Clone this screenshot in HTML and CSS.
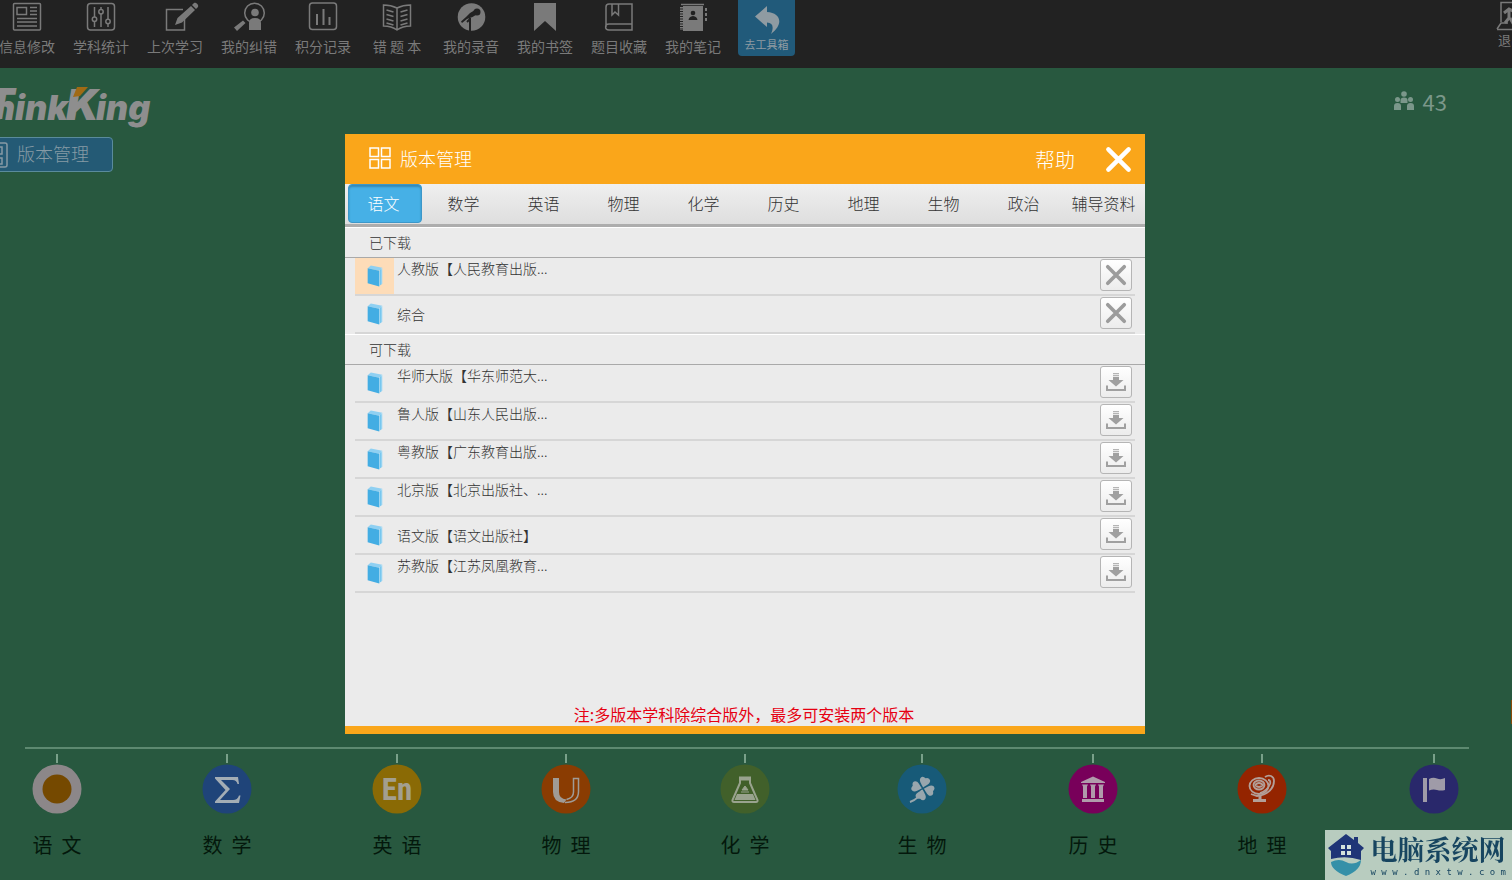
FILE: index.html
```
<!DOCTYPE html>
<html lang="zh-CN">
<head>
<meta charset="utf-8">
<meta name="viewport" content="width=device-width, initial-scale=1">
<title>版本管理</title>
<link rel="stylesheet" href="styles.css">
</head>
<body>
<svg class="sprite" aria-hidden="true">
  <symbol id="i-book" viewBox="0.5 0.5 15 21">
    <path d="M1 3.5 4 1 15 3.2 12 6z" fill="#8fd0f2"/>
    <path d="M12 6 15 3.2V18l-3 3z" fill="#a5dbf5"/>
    <path d="M13.5 4.7V19.5" stroke="#5dbbe9" stroke-width=".8"/>
    <path d="M1 3.5 12 6v15L1 18z" fill="#43ade3"/>
  </symbol>
  <symbol id="i-cross" viewBox="0 0 24 24">
    <path d="M3 3l18 18M21 3l-18 18" stroke="currentColor" stroke-width="4" stroke-linecap="round"/>
  </symbol>
  <symbol id="i-load" viewBox="-1 -1 22 22">
    <path d="M7 1h6v1.200H7zM7 3h6v1.200H7z" fill="#b5b5b5"/>
    <path d="M7 5h6v3h4.500L10 14.500 2.500 8H7z" fill="#a0a0a0"/>
    <path d="M1 13.500v4.500h18v-4.500" fill="none" stroke="#a0a0a0" stroke-width="2"/>
  </symbol>
  <symbol id="i-grid" viewBox="0 0 22 22">
    <path d="M1 1h8.500v8.500H1zM12.500 1H21v8.500h-8.500zM1 12.500h8.500V21H1zM12.500 12.500H21V21h-8.500z" fill="none" stroke="currentColor" stroke-width="1.500"/>
  </symbol>
</svg>

<div class="page">
  <header class="toolbar">
    <nav class="tools">
      <button class="tool"><svg viewBox="0 0 30 30"><rect x="1.500" y="1.500" width="27" height="26.500" rx="1"/><path d="M5 5.500h9.500v7H5zM18 5.500h7M18 9h7M18 12.500h7M5 16.500h20M5 20h20M5 24h20"/></svg><span>信息修改</span></button>
      <button class="tool"><svg viewBox="0 0 30 30"><rect x="1.500" y="1.500" width="27" height="26.500" rx="3"/><path d="M8.500 5v10M8.500 19.500V25M15 5v2.500M15 12v13M22 5v12M22 22v3"/><circle cx="8.500" cy="17.200" r="2.200"/><circle cx="15" cy="9.700" r="2.200"/><circle cx="22" cy="19.500" r="2.200"/></svg><span>学科统计</span></button>
      <button class="tool"><svg viewBox="-7 0 34 30"><path d="M18 7.500H1.500V28h18V16"/><path class="solid" d="M10 23l2.500-7L26 4l4 4L17 20.500zM27 3l2-2c2-1 5 2 4 4l-2 2z"/></svg><span>上次学习</span></button>
      <button class="tool"><svg viewBox="-1 0 32 30"><circle cx="20.500" cy="11" r="9.800"/><circle class="solid" cx="21" cy="10.500" r="3.800"/><path class="solid" d="M15 28v-7q0-5 6-5t6 5v7zM0 25.500l9-7 2.500 2.500-8.500 8z"/></svg><span>我的纠错</span></button>
      <button class="tool"><svg viewBox="0 0 30 30"><rect x="1.500" y="1" width="27" height="26.500" rx="3"/><path d="M9 12v11M15.500 7v16M21.500 15v8" stroke-width="2"/></svg><span>积分记录</span></button>
      <button class="tool"><svg viewBox="0 0 30 30"><path d="M15 6v22M15 6C11 4 6 3 1.500 3v21c5 0 10 1.500 13.500 4 3.500-2.500 8.500-4 13.500-4V3C24 3 19 4 15 6zM4.500 8l7 2M4.500 12.500l7 2M4.500 17l7 2M4.500 21l7 2M25.500 8l-7 2M25.500 12.500l-7 2M25.500 17l-7 2M25.500 21l-7 2"/></svg><span>错 题 本</span></button>
      <button class="tool"><svg viewBox="0 0 30 30"><circle class="solid" cx="15.500" cy="15" r="13.800"/><path class="hole" d="M14 11l5-3 2.500 4-5 3-5.500 2-5 4-1-1.500L10 15z"/><circle class="hole" cx="21" cy="10" r="3.500"/><path d="M14 16v13M11 20l3-3" stroke="#222" stroke-width="2"/></svg><span>我的录音</span></button>
      <button class="tool"><svg viewBox="0 0 30 30"><path class="solid" d="M4 1h22v28L15 19 4 29z"/></svg><span>我的书签</span></button>
      <button class="tool"><svg viewBox="0 0 30 30"><path d="M28 22H5c-4.500 0-4.500 6 0 6h23V2H5Q2 2 2 5v20M8 2v11l3-3 3.500 3V2"/></svg><span>题目收藏</span></button>
      <button class="tool"><svg viewBox="0 0 30 30"><path class="solid" d="M5 4h20v25H5z"/><path d="M3 2.500h23" /><path d="M4 5v23" stroke-width="4" stroke-dasharray="1.500 1"/><path d="M28 6v13" stroke-width="2" stroke-dasharray="3 2"/><circle class="hole" cx="15" cy="11" r="2.300"/><path class="hole" d="M10.500 18q.5-3.500 4.500-4 4 .5 4.500 4z"/></svg><span>我的笔记</span></button>
      <button class="tool tool-box"><svg viewBox="0 0 30 30"><path class="solid" d="M3 12.500L15 2v6c14 1 17 12 4 22 3-7 2-11-4-11.500V23z"/></svg><span>去工具箱</span></button>
    </nav>
    <button class="tool exit"><svg viewBox="0 0 30 30"><path d="M5 21V1.500h21V24M1 28l4-6h7M1 28.500h28" /><path d="M8 12l5-4 4 2 3 5M13 10v7l-4 5M14 17l4 7" stroke-width="3"/></svg><span>退出</span></button>
  </header>

  <main class="board">
    <div class="board-top">
      <div class="brand">
        <svg class="logo" viewBox="0 0 160 50" role="img" aria-label="ThinkKing">
          <text class="logo-cap" x="-15" y="37">T</text>
          <text class="logo-low" x="-7" y="38">hink</text>
          <text class="logo-cap" x="66" y="38">K</text>
          <text class="logo-low" x="96" y="38">ing</text>
          <path d="M77 5h11l-8 9-7 1z" fill="#a06a14"/>
        </svg>
        <button class="manage"><svg viewBox="0 0 22 26"><path d="M1 1h18q2 0 2 2v20q0 2-2 2H1M8 5h8v7H8M8 16h8v6H8" fill="none" stroke="currentColor" stroke-width="1.500"/></svg><span>版本管理</span></button>
      </div>
      <div class="count">
        <svg viewBox="0 0 22 20"><circle cx="11" cy="3" r="2.800"/><path d="M7.500 12V9q0-2.500 3.500-2.500T14.500 9v3z"/><circle cx="4.500" cy="8.500" r="2.500"/><circle cx="17.500" cy="8.500" r="2.500"/><path d="M1 19v-4q0-3 3.500-3T8 15v4zM14 19v-4q0-3 3.500-3t3.500 3v4z"/></svg>
        <span>43</span>
      </div>
    </div>
    <div class="side-tab"></div>
  </main>

  <footer class="subjects">
    <div class="rail"></div>
    <nav class="stops">
      <button class="stop"><svg viewBox="0 0 50 50"><circle cx="25" cy="25" r="24.500" fill="#8c8789"/><circle cx="25" cy="25" r="14.500" fill="#754900"/></svg><span>语  文</span></button>
      <button class="stop"><svg viewBox="0 0 50 50"><circle cx="25" cy="25" r="24.500" fill="#1f4479"/><path d="M13 13h23l1 7h-1.500q-1-4-5-4H19l9 9-10 11h13q4.500 0 6-4.500h1.500L37 39H13v-1.500L23.500 26 13 14.500z" fill="#a3adb5"/></svg><span>数  学</span></button>
      <button class="stop"><svg viewBox="0 0 50 50"><circle cx="25" cy="25" r="24.500" fill="#8a6a05"/><text class="en" x="25" y="36" text-anchor="middle">En</text></svg><span>英  语</span></button>
      <button class="stop"><svg viewBox="0 0 50 50"><circle cx="25" cy="25" r="24.500" fill="#8a3c02"/><path d="M12 14h6v14q0 7 7.500 7.500L23 39Q12 38 12 28z" fill="#a09b96"/><path d="M24 38.500c9 0 13.500-4 13.500-11V14.500h-5V28q0 6-7 7.500" fill="none" stroke="#a09b96" stroke-width="1.500"/></svg><span>物  理</span></button>
      <button class="stop"><svg viewBox="0 0 50 50"><circle cx="25" cy="25" r="24.500" fill="#41602a"/><path d="M20 14h10v5l7.500 17q.5 2-1.500 2H14q-2 0-1.500-2L20 19z" fill="none" stroke="#99a38e" stroke-width="2"/><path d="M19 12.500h12v4H19zM17 30h16l2.500 6h-21z" fill="#99a38e"/><path d="M25 22l3 4h-6zM21 28h8" stroke="#99a38e" fill="#99a38e"/></svg><span>化  学</span></button>
      <button class="stop"><svg viewBox="0 0 50 50"><circle cx="25" cy="25" r="24.500" fill="#175a78"/><g fill="#98a6ad" transform="rotate(15 26 24)"><path id="leaf" d="M26 23.500C23 20 20 18 21 15q1.500-3 5-1 3.500-2 5 1c1 3-2 5-5 8.500z"/><use href="#leaf" transform="rotate(90 26 24.500)"/><use href="#leaf" transform="rotate(180 26 24.500)"/><use href="#leaf" transform="rotate(270 26 24.500)"/></g><path d="M25 26q-3 9-12 12" fill="none" stroke="#98a6ad" stroke-width="2"/></svg><span>生  物</span></button>
      <button class="stop"><svg viewBox="0 0 50 50"><circle cx="25" cy="25" r="24.500" fill="#78005a"/><path d="M13 18l12-5.500L37 18v1H13zM14 20.500h6l-1 2V34h-4V22.500zM22 20.500h6l-1 2V34h-4V22.500zM30 20.500h6l-1 2V34h-4V22.500zM14 35h22v3H14z" fill="#b09bab"/></svg><span>历  史</span></button>
      <button class="stop"><svg viewBox="0 0 50 50"><circle cx="25" cy="25" r="24.500" fill="#942400"/><g fill="none" stroke="#b39f98" stroke-width="1.800"><ellipse cx="22" cy="22" rx="9.500" ry="8"/><ellipse cx="22" cy="21" rx="5.500" ry="4.500"/><path d="M18 21q4-4 8 0-4 4-8 0M28 13c4-3 9-1 9 4 0 8-7 14-17 15l-6-2M31 16q3 0 2 4-3 7-10 9"/><path d="M23 32v4M16 36.500h13" stroke-width="3"/></g></svg><span>地  理</span></button>
      <button class="stop" aria-label="政治"><svg viewBox="0 0 50 50"><circle cx="25" cy="25" r="24.500" fill="#29286b"/><path d="M14 14h4v24h-4zM20 15q4-2 8-.5t8-.5v12q-4 1-8 0t-8 .5z" fill="#9f9ba8"/></svg></button>
    </nav>
  </footer>
</div>

<div class="overlay">
  <section class="dialog" role="dialog" aria-labelledby="dlg-title">
    <header class="dlg-head">
      <svg class="dlg-icon"><use href="#i-grid"/></svg>
      <h1 id="dlg-title">版本管理</h1>
      <button class="help">帮助</button>
      <button class="close" aria-label="关闭"><svg><use href="#i-cross"/></svg></button>
    </header>
    <nav class="tabs">
      <button class="tab active">语文</button>
      <button class="tab">数学</button>
      <button class="tab">英语</button>
      <button class="tab">物理</button>
      <button class="tab">化学</button>
      <button class="tab">历史</button>
      <button class="tab">地理</button>
      <button class="tab">生物</button>
      <button class="tab">政治</button>
      <button class="tab">辅导资料</button>
    </nav>
    <div class="dlg-body">
      <h2>已下载</h2>
      <ul>
        <li class="current"><i><svg><use href="#i-book"/></svg></i><span>人教版【人民教育出版...</span><button class="act" aria-label="删除"><svg><use href="#i-cross"/></svg></button></li>
        <li class="short"><i><svg><use href="#i-book"/></svg></i><span>综合</span><button class="act" aria-label="删除"><svg><use href="#i-cross"/></svg></button></li>
      </ul>
      <h2>可下载</h2>
      <ul>
        <li><i><svg><use href="#i-book"/></svg></i><span>华师大版【华东师范大...</span><button class="act" aria-label="下载"><svg><use href="#i-load"/></svg></button></li>
        <li><i><svg><use href="#i-book"/></svg></i><span>鲁人版【山东人民出版...</span><button class="act" aria-label="下载"><svg><use href="#i-load"/></svg></button></li>
        <li><i><svg><use href="#i-book"/></svg></i><span>粤教版【广东教育出版...</span><button class="act" aria-label="下载"><svg><use href="#i-load"/></svg></button></li>
        <li><i><svg><use href="#i-book"/></svg></i><span>北京版【北京出版社、...</span><button class="act" aria-label="下载"><svg><use href="#i-load"/></svg></button></li>
        <li class="short"><i><svg><use href="#i-book"/></svg></i><span>语文版【语文出版社】</span><button class="act" aria-label="下载"><svg><use href="#i-load"/></svg></button></li>
        <li><i><svg><use href="#i-book"/></svg></i><span>苏教版【江苏凤凰教育...</span><button class="act" aria-label="下载"><svg><use href="#i-load"/></svg></button></li>
      </ul>
    </div>
    <p class="note">注:多版本学科除综合版外，最多可安装两个版本</p>
  </section>
</div>

<aside class="site">
  <svg viewBox="0 0 36 42"><path d="M18 0l8 6V3h4v6l6 5-3 3v9Q18 21 3 25v-8l-3-3z" fill="#1f3577"/><path d="M13 11h4v4h-4zM19 11h4v4h-4zM13 17h4v4h-4zM19 17h4v4h-4z" fill="#d5e2dc"/><path d="M3 28q8-4 15 0t15-2q0 10-15 16Q3 36 3 28z" fill="#3590a8"/></svg>
  <div><strong>电脑系统网</strong><small>w w w . d n x t w . c o m</small></div>
</aside>
</body>
</html>
```
FILE: styles.css
```
* { box-sizing: border-box; }

body {
  margin: 0;
  font-family: "Noto Sans CJK SC", sans-serif;
  font-weight: 300;
  overflow: hidden;
}

button {
  margin: 0;
  padding: 0;
  border: 0;
  background: none;
  color: inherit;
  font: inherit;
  cursor: pointer;
}

svg { display: block; }
.sprite { position: absolute; width: 0; height: 0; }

.page {
  display: flex;
  flex-direction: column;
  min-height: 100vh;
  background: #28583f;
  overflow: hidden;
}

/* Top toolbar */
.toolbar {
  display: flex;
  justify-content: space-between;
  height: 68px;
  background: #222;
  color: #7a7a7a;
  font-weight: 400;
  overflow: hidden;
}
.tools { display: flex; margin-left: -10px; }
.tool {
  display: flex;
  flex-direction: column;
  align-items: center;
  flex: none;
  width: 74px;
  padding-top: 2px;
  gap: 5px;
  font-size: 14px;
  line-height: 18px;
  white-space: nowrap;
}
.tool svg {
  width: 34px;
  height: 30px;
  overflow: visible;
  fill: none;
  stroke: currentColor;
  stroke-width: 1.5;
}
.tool .solid { fill: currentColor; stroke: none; }
.tool .hole { fill: #222; stroke: none; }
.tool-box {
  width: 57px;
  height: 56px;
  margin-left: 8px;
  padding-top: 4px;
  gap: 1px;
  border-radius: 0 0 4px 4px;
  background: #215a7a;
  color: #8f9ba2;
  font-size: 11px;
}
.exit { margin-right: -36px; padding-top: 1px; gap: 0; font-size: 13px; }

/* Board */
.board { display: flex; flex-direction: column; flex: 1; justify-content: space-between; }
.board-top { display: flex; justify-content: space-between; align-items: flex-start; }
.brand { padding-top: 14px; }
.logo { width: 160px; height: 50px; fill: #8e8e8e; }
.logo text { font-family: Inter, sans-serif; font-weight: 900; font-style: italic; }
.logo-cap { font-size: 43px; }
.logo-low { font-size: 34px; }
.manage {
  display: flex;
  align-items: center;
  gap: 9px;
  height: 35px;
  margin: 5px 0 0 -15px;
  padding-right: 23px;
  border: 1px solid #5a8b9c;
  border-radius: 4px;
  background: #245a75;
  color: #869aa5;
  font-size: 18px;
}
.manage svg { width: 22px; height: 26px; }
.manage span { padding-bottom: 3px; }
.count {
  display: flex;
  align-items: center;
  gap: 8px;
  padding: 18px 65px 0 0;
  color: #7b978a;
  font-size: 22px;
  font-weight: 400;
  line-height: 30px;
}
.count svg { width: 22px; height: 20px; fill: currentColor; }
.side-tab { align-self: flex-end; width: 1px; height: 24px; margin-bottom: 23px; background: #8a4a08; }

/* Subject rail */
.subjects { height: 133px; }
.rail { height: 2px; margin: 0 43px 0 25px; background: #5d8970; }
.stops {
  display: grid;
  grid-template-columns: 170fr 170fr 170fr 168fr 190fr 164fr 178fr 160fr 184fr;
  margin: 5px -14px 0 -28px;
}
.stop {
  display: flex;
  flex-direction: column;
  align-items: center;
  color: #04180c;
  font-size: 20px;
  font-weight: 400;
  line-height: 28px;
  white-space: pre;
}
.stop::before { content: ""; width: 2px; height: 9px; margin-bottom: 1px; background: #79a089; }
.stop svg { width: 50px; height: 50px; margin-bottom: 17px; }
.en { fill: #a39f8f; font: bold 31px "Liberation Sans Narrow", "Roboto Condensed", Roboto, sans-serif; }

/* Dialog */
.overlay {
  position: fixed;
  inset: 0;
  display: flex;
  align-items: center;
  justify-content: center;
  padding: 0 22px 12px 0;
}
.dialog {
  display: flex;
  flex-direction: column;
  width: 100%;
  max-width: 800px;
  min-height: 600px;
  border-bottom: 8px solid #faa61a;
  background: #ebebeb;
  color: #333;
}
.dlg-head {
  display: flex;
  align-items: center;
  height: 50px;
  padding: 0 13px 0 24px;
  background: #faa61a;
  color: #fff;
}
.dlg-icon { width: 22px; height: 22px; margin: 0 9px 2px 0; }
.dlg-head h1 { flex: 1; margin: 0; padding-bottom: 2px; font-size: 18px; font-weight: 300; }
.help { margin-right: 30px; font-size: 20px; }
.close svg { width: 27px; height: 27px; }
.tabs {
  display: grid;
  grid-template-columns: repeat(10, 1fr);
  height: 43px;
  border-bottom: 3px solid #adadad;
  background: linear-gradient(#efefef, #dedede);
}
.tab { padding: 0 3px 2px 0; font-size: 16px; white-space: nowrap; }
.tab.active {
  margin: 0 3px 1px;
  border: 1px solid #3c97c9;
  border-radius: 4px;
  background: #46b0e6;
  box-shadow: inset 0 2px 2px #3589b6;
  color: #fff;
}
.dlg-body { flex: 1; }
.dlg-body h2 {
  height: 31px;
  margin: 0;
  padding-left: 24px;
  border-top: 1px solid #fff;
  border-bottom: 1px solid #a9a9a9;
  font-size: 14px;
  font-weight: 300;
  line-height: 28px;
}
.dlg-body ul { margin: 0; padding: 0 10px; list-style: none; }
.dlg-body li {
  display: flex;
  height: 38px;
  border-bottom: 2px solid #d6d6d6;
  font-size: 14px;
  line-height: 20px;
}
.dlg-body li i { display: grid; place-items: center; width: 39px; margin-right: 3px; }
.dlg-body li i svg { width: 16px; height: 22px; }
.dlg-body li span { flex: 1; }
.current i { background: #fddcb8; }
.dlg-body .short { line-height: 36px; }
.act {
  display: grid;
  place-items: center;
  width: 32px;
  height: 32px;
  margin: 1px 3px 0 0;
  border: 1px solid #b5b5b5;
  border-radius: 3px;
  background: linear-gradient(#fff, #ececec);
  color: #9c9c9c;
}
.act svg { width: 22px; height: 22px; }
.note {
  margin: 0;
  padding: 0 2px 1px 0;
  color: #e60012;
  font-size: 16px;
  font-weight: 400;
  line-height: 22px;
  text-align: center;
}

/* Site badge */
.site {
  position: fixed;
  right: 0;
  bottom: 0;
  display: flex;
  align-items: center;
  gap: 7px;
  height: 50px;
  padding: 0 6px 0 3px;
  background: #b8ccbf;
  color: #174560;
}
.site svg { width: 36px; height: 42px; }
.site div { display: flex; flex-direction: column; }
.site strong {
  font-family: "Noto Serif CJK SC", "Noto Sans CJK SC", serif;
  font-size: 27px;
  font-weight: 700;
  line-height: 34px;
}
.site small { font-family: "DejaVu Sans Mono", monospace; font-size: 9px; font-weight: 400; line-height: 12px; }
```
